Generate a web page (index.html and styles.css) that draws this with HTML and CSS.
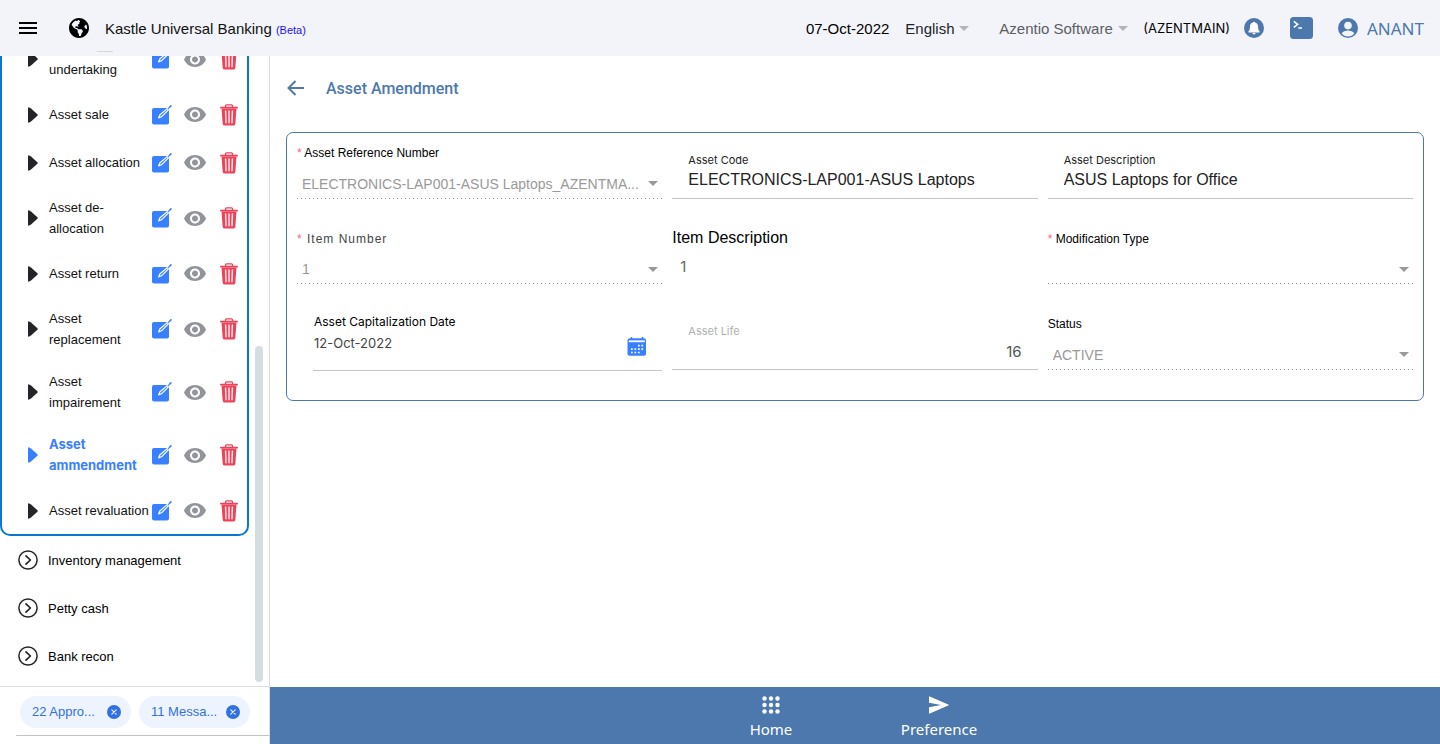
FILE: index.html
```html
<!DOCTYPE html>
<html lang="en">
<head>
<meta charset="utf-8">
<title>Kastle Universal Banking</title>
<link rel="stylesheet" href="styles.css">
</head>
<body>
<svg class="defs" aria-hidden="true">
  <symbol id="i-play" viewBox="0 0 10 16"><path d="M0 1.2Q0 0 1.2 .4L3 1.4 9.4 7.2Q10.2 8 9.4 8.8L3 14.600 1.200 15.600Q0 16 0 14.800z"/></symbol>
  <symbol id="i-edit" viewBox="0 0 20 20"><path d="M2 3H17V17.500Q17 19.500 15 19.500H2Q0 19.500 0 17.500V5Q0 3 2 3z"/><path d="M6.600 12.900 7.800 10 15.200 3.600 16.400 4.800 9.500 11.800z" fill="#3880ff" stroke="#fff" stroke-width="1.200" stroke-linejoin="round"/><path d="M17.300 2.500 18.900 .9" stroke="#3880ff" stroke-width="1.600" stroke-linecap="round"/></symbol>
  <symbol id="i-eye" viewBox="1 4.500 22 15"><path d="M12 4.500C7 4.500 2.730 7.610 1 12c1.730 4.390 6 7.500 11 7.500s9.270-3.110 11-7.500c-1.730-4.390-6-7.500-11-7.500zM12 17c-2.760 0-5-2.240-5-5s2.240-5 5-5 5 2.240 5 5-2.240 5-5 5zm0-8c-1.660 0-3 1.340-3 3s1.340 3 3 3 3-1.340 3-3-1.340-3-3-3z"/></symbol>
  <symbol id="i-trash" viewBox="0 0 18 22"><path d="M5.500 3V1.800Q5.500 .8 6.500 .8H11.500Q12.500 .8 12.500 1.800V3" fill="none" stroke="currentColor" stroke-width="1.300"/><rect y="2.800" width="18" height="1.800" rx=".8"/><path d="M1.500 4.500H16.500L15.300 20Q15.100 21.500 13.300 21.500H4.700Q2.900 21.500 2.700 20z"/><path d="M5.600 7 6 18.800M9 7V18.800M12.400 7 12 18.800" stroke="#fff" stroke-opacity=".85" stroke-width="1.500" stroke-linecap="round"/></symbol>
  <symbol id="i-next" viewBox="0 0 20 20"><circle cx="10" cy="10" r="9.100" fill="none" stroke="currentColor" stroke-width="1.500"/><path d="M8 5.800 12.400 10 8 14.200" fill="none" stroke="currentColor" stroke-width="1.700" stroke-linecap="round" stroke-linejoin="round"/></symbol>
  <symbol id="i-down" viewBox="0 0 10 5"><path d="M0 0H10L5 5z"/></symbol>
  <symbol id="i-close" viewBox="0 0 14 14"><circle cx="7" cy="7" r="7"/><path d="M4.800 4.800 9.200 9.200M9.200 4.800 4.800 9.200" stroke="#e6efff" stroke-width="1.200" stroke-linecap="round"/></symbol>
</svg>

<header class="topbar">
  <button class="icon-btn menu-btn" aria-label="Menu"><svg width="18" height="12" viewBox="0 0 18 12"><path d="M0 1H18M0 6H18M0 11H18" stroke="#000" stroke-width="2"/></svg></button>
  <svg class="globe" width="20" height="20" viewBox="0 8 496 496"><path d="M248 8C111.030 8 0 119.030 0 256s111.030 248 248 248 248-111.030 248-248S384.970 8 248 8zm82.290 357.600c-3.900 3.880-7.990 7.950-11.310 11.280-2.990 3-5.100 6.700-6.170 10.710-1.510 5.660-2.730 11.380-4.770 16.870l-17.390 46.850c-13.760 3-28 4.690-42.650 4.690v-27.380c1.690-12.620-7.640-36.260-22.630-51.250-6-6-9.370-14.140-9.370-22.630v-32.010c0-11.640-6.270-22.340-16.460-27.970-14.370-7.950-34.810-19.060-48.810-26.110-11.480-5.780-22.100-13.140-31.650-21.750l-.8-.72a114.792 114.792 0 0 1-18.060-20.740c-9.380-13.770-24.660-36.420-34.590-51.140 20.470-45.500 57.360-82.040 103.200-101.890l24.010 12.010C203.480 89.740 216 82.010 216 70.110v-11.300c7.990-1.290 16.120-2.110 24.390-2.420l28.300 28.300c6.250 6.250 6.250 16.380 0 22.630L264 112l-10.340 10.340c-3.120 3.120-3.120 8.190 0 11.310l4.690 4.690c3.120 3.120 3.120 8.190 0 11.310l-8 8a8.008 8.008 0 0 1-5.660 2.340h-8.990c-2.080 0-4.080.81-5.580 2.270l-9.920 9.650a8.008 8.008 0 0 0-1.580 9.310l15.590 31.190c2.660 5.320-1.210 11.580-7.150 11.580h-5.640c-1.930 0-3.790-.7-5.240-1.960l-9.280-8.060a16.017 16.017 0 0 0-15.550-3.100l-31.170 10.390a11.950 11.950 0 0 0-8.170 11.340c0 4.530 2.560 8.660 6.610 10.690l11.080 5.540c9.410 4.710 19.790 7.160 30.310 7.160s22.590 27.290 32 32h66.750c8.490 0 16.620 3.370 22.630 9.370l13.690 13.690a30.503 30.503 0 0 1 8.930 21.570 46.536 46.536 0 0 1-13.720 32.980zM417 274.250c-5.790-1.450-10.840-5-14.150-9.970l-17.980-26.970a23.970 23.970 0 0 1 0-26.620l19.590-29.380c2.320-3.470 5.500-6.290 9.240-8.150l12.980-6.490C440.200 193.590 448 223.870 448 256c0 8.670-.74 17.160-1.820 25.540L417 274.250z"/></svg>
  <h1 class="brand">Kastle Universal Banking <span class="beta">(Beta)</span></h1>
  <time class="today">07-Oct-2022</time>
  <label class="top-select language"><select aria-label="Language"><option>English</option></select><svg width="10" height="5"><use href="#i-down"/></svg></label>
  <label class="top-select company"><select aria-label="Company"><option>Azentio Software</option></select><svg width="10" height="5"><use href="#i-down"/></svg></label>
  <span class="branch">(AZENTMAIN)</span>
  <button class="icon-btn bell" aria-label="Notifications"><svg width="20" height="20" viewBox="0 0 20 20"><circle cx="10" cy="10" r="10"/><path d="M10 3.700c.6 0 1 .4 1 .9 2 .5 3.100 2 3.100 4.200 0 3 .6 3.800 1.500 4.700.3.400.1.900-.4.900H4.800c-.5 0-.7-.5-.4-.9.900-.9 1.500-1.700 1.500-4.700 0-2.200 1.100-3.700 3.100-4.200 0-.5.400-.9 1-.9zM8.400 15.100h3.200c-.2.800-.8 1.300-1.600 1.300s-1.400-.5-1.600-1.300z" fill="#fff"/></svg></button>
  <button class="icon-btn console" aria-label="Console"><svg width="23" height="22" viewBox="0 0 23 22"><rect width="23" height="22" rx="3.500"/><path d="M3.800 4.300 7.700 7.300 3.800 10.300M8.300 11H12" fill="none" stroke="#fff" stroke-width="1.500"/></svg></button>
  <button class="icon-btn user"><svg width="20" height="20" viewBox="0 0 20 20"><circle cx="10" cy="10" r="10"/><circle cx="10" cy="7.600" r="3.800" fill="#f3f4f9"/><path d="M3.700 15.300C5 13.300 7.500 12.500 10 12.500s5 .8 6.300 2.800C14.800 17.400 12.500 18.500 10 18.500s-4.800-1.100-6.300-3.200z" fill="#f3f4f9"/></svg><span>ANANT</span></button>
</header>

<div class="body">
  <aside class="sidebar">
    <nav class="nav">
      <ul class="group">
        <li class="item"><svg class="play"><use href="#i-play"/></svg><a href="#"><br>undertaking</a><button class="icon-btn edit" aria-label="Edit"><svg><use href="#i-edit"/></svg></button><button class="icon-btn view" aria-label="View"><svg><use href="#i-eye"/></svg></button><button class="icon-btn trash" aria-label="Delete"><svg><use href="#i-trash"/></svg></button></li>
        <li class="item"><svg class="play"><use href="#i-play"/></svg><a href="#">Asset sale</a><button class="icon-btn edit" aria-label="Edit"><svg><use href="#i-edit"/></svg></button><button class="icon-btn view" aria-label="View"><svg><use href="#i-eye"/></svg></button><button class="icon-btn trash" aria-label="Delete"><svg><use href="#i-trash"/></svg></button></li>
        <li class="item"><svg class="play"><use href="#i-play"/></svg><a href="#">Asset allocation</a><button class="icon-btn edit" aria-label="Edit"><svg><use href="#i-edit"/></svg></button><button class="icon-btn view" aria-label="View"><svg><use href="#i-eye"/></svg></button><button class="icon-btn trash" aria-label="Delete"><svg><use href="#i-trash"/></svg></button></li>
        <li class="item"><svg class="play"><use href="#i-play"/></svg><a href="#">Asset de-<br>allocation</a><button class="icon-btn edit" aria-label="Edit"><svg><use href="#i-edit"/></svg></button><button class="icon-btn view" aria-label="View"><svg><use href="#i-eye"/></svg></button><button class="icon-btn trash" aria-label="Delete"><svg><use href="#i-trash"/></svg></button></li>
        <li class="item"><svg class="play"><use href="#i-play"/></svg><a href="#">Asset return</a><button class="icon-btn edit" aria-label="Edit"><svg><use href="#i-edit"/></svg></button><button class="icon-btn view" aria-label="View"><svg><use href="#i-eye"/></svg></button><button class="icon-btn trash" aria-label="Delete"><svg><use href="#i-trash"/></svg></button></li>
        <li class="item"><svg class="play"><use href="#i-play"/></svg><a href="#">Asset<br>replacement</a><button class="icon-btn edit" aria-label="Edit"><svg><use href="#i-edit"/></svg></button><button class="icon-btn view" aria-label="View"><svg><use href="#i-eye"/></svg></button><button class="icon-btn trash" aria-label="Delete"><svg><use href="#i-trash"/></svg></button></li>
        <li class="item"><svg class="play"><use href="#i-play"/></svg><a href="#">Asset<br>impairement</a><button class="icon-btn edit" aria-label="Edit"><svg><use href="#i-edit"/></svg></button><button class="icon-btn view" aria-label="View"><svg><use href="#i-eye"/></svg></button><button class="icon-btn trash" aria-label="Delete"><svg><use href="#i-trash"/></svg></button></li>
        <li class="item active"><svg class="play"><use href="#i-play"/></svg><a href="#" aria-current="page">Asset<br>ammendment</a><button class="icon-btn edit" aria-label="Edit"><svg><use href="#i-edit"/></svg></button><button class="icon-btn view" aria-label="View"><svg><use href="#i-eye"/></svg></button><button class="icon-btn trash" aria-label="Delete"><svg><use href="#i-trash"/></svg></button></li>
        <li class="item"><svg class="play"><use href="#i-play"/></svg><a href="#">Asset revaluation</a><button class="icon-btn edit" aria-label="Edit"><svg><use href="#i-edit"/></svg></button><button class="icon-btn view" aria-label="View"><svg><use href="#i-eye"/></svg></button><button class="icon-btn trash" aria-label="Delete"><svg><use href="#i-trash"/></svg></button></li>
      </ul>
      <a class="section" href="#"><svg><use href="#i-next"/></svg>Inventory management</a>
      <a class="section" href="#"><svg><use href="#i-next"/></svg>Petty cash</a>
      <a class="section" href="#"><svg><use href="#i-next"/></svg>Bank recon</a>
      <span class="thumb"></span>
    </nav>
    <div class="chips">
      <div class="chip"><span>22 Appro...</span><button class="icon-btn" aria-label="Dismiss approvals"><svg><use href="#i-close"/></svg></button></div>
      <div class="chip"><span>11 Messa...</span><button class="icon-btn" aria-label="Dismiss messages"><svg><use href="#i-close"/></svg></button></div>
    </div>
  </aside>

  <div class="page">
    <main class="content">
      <div class="title-row">
        <button class="icon-btn back" aria-label="Back"><svg width="18" height="16" viewBox="0 0 18 16"><path d="M17 8H2M8.500 1 1.500 8 8.500 15" fill="none" stroke="#4c78ae" stroke-width="2"/></svg></button>
        <h2>Asset Amendment</h2>
      </div>
      <form class="card">
        <div class="field dotted">
          <label for="ref"><span class="req">*</span> Asset Reference Number</label>
          <div class="select"><select id="ref" disabled><option>ELECTRONICS-LAP001-ASUS Laptops_AZENTMA...</option></select><svg><use href="#i-down"/></svg></div>
        </div>
        <div class="field solid floating">
          <label for="code">Asset Code</label>
          <input id="code" type="text" value="ELECTRONICS-LAP001-ASUS Laptops">
        </div>
        <div class="field solid floating">
          <label for="desc">Asset Description</label>
          <input id="desc" type="text" value="ASUS Laptops for Office">
        </div>
        <div class="field dotted">
          <label class="spaced" for="item"><span class="req">*</span> Item Number</label>
          <div class="select"><select id="item" disabled><option>1</option></select><svg><use href="#i-down"/></svg></div>
        </div>
        <div class="field plain">
          <label for="itemdesc">Item Description</label>
          <input id="itemdesc" type="text" value="1" disabled>
        </div>
        <div class="field dotted">
          <label for="mod"><span class="req">*</span> Modification Type</label>
          <div class="select"><select id="mod" disabled><option></option></select><svg><use href="#i-down"/></svg></div>
        </div>
        <div class="field solid date">
          <label for="cap">Asset Capitalization Date</label>
          <div class="date-row"><input id="cap" type="text" value="12-Oct-2022"><button type="button" class="icon-btn" aria-label="Pick a date"><svg width="20" height="19" viewBox="0 0 20 19"><path d="M3 1.200H17Q19 1.200 19 3.200V17Q19 18.800 17 18.800H2.500Q.5 18.800 .5 17V3.200Q.5 1.200 3 1.200z" fill="#3880ff"/><path d="M4.500 0V3M15.500 0V3" stroke="#3880ff" stroke-width="1.500"/><path d="M1.800 3.400H17.800V5.200H1.800z" fill="#fff"/><path d="M11 8.700H12.700M14.400 8.700H16.100M4 12.100H5.700M7.500 12.100H9.200M11 12.100H12.700M14.400 12.100H16.100M4 15.500H5.700M7.500 15.500H9.200M11 15.500H12.700" stroke="#fff" stroke-width="1.700"/></svg></button></div>
        </div>
        <div class="field solid floating life">
          <label for="life">Asset Life</label>
          <input id="life" type="text" value="16" disabled>
        </div>
        <div class="field dotted">
          <label for="status">Status</label>
          <div class="select"><select id="status" disabled><option>ACTIVE</option></select><svg><use href="#i-down"/></svg></div>
        </div>
      </form>
    </main>
    <footer class="tabs">
      <a href="#"><svg width="18" height="18" viewBox="0 0 18 18"><g fill="#fff"><circle cx="2.500" cy="2.500" r="2.200"/><circle cx="9" cy="2.500" r="2.200"/><circle cx="15.500" cy="2.500" r="2.200"/><circle cx="2.500" cy="9" r="2.200"/><circle cx="9" cy="9" r="2.200"/><circle cx="15.500" cy="9" r="2.200"/><circle cx="2.500" cy="15.500" r="2.200"/><circle cx="9" cy="15.500" r="2.200"/><circle cx="15.500" cy="15.500" r="2.200"/></g></svg>Home</a>
      <a href="#"><svg width="20" height="18" viewBox="0 0 20 18"><path d="M0 1Q0 .2 .8 .4L19.200 8.400Q20.300 9 19.200 9.600L.8 17.600Q0 17.800 0 17V11.200L12 9 0 6.800z" fill="#fff"/></svg>Preference</a>
    </footer>
  </div>
</div>
</body>
</html>
```

FILE: styles.css
```css
* { box-sizing: border-box; }
body { margin: 0; height: 100vh; display: flex; flex-direction: column; overflow: hidden; background: #fff; color: #000; font-family: "Liberation Sans", Arial, sans-serif; font-size: 13px; }
.defs { position: absolute; width: 0; height: 0; }
h1, h2, ul { margin: 0; padding: 0; font-weight: 400; }
a { color: inherit; text-decoration: none; }
svg { display: block; fill: currentColor; flex: none; }
input, select { margin: 0; padding: 0; border: 0; outline: 0; background: none; font: inherit; color: inherit; opacity: 1; appearance: none; min-width: 0; }
.icon-btn { display: flex; align-items: center; flex: none; margin: 0; padding: 0; border: 0; background: none; color: #4c78ae; font: inherit; cursor: pointer; }

.topbar { position: relative; flex: none; height: 56px; display: flex; align-items: center; padding: 0 16px 0 19px; background: #f3f4f9; }
.topbar::after { content: ""; position: absolute; left: 97px; bottom: 4px; width: 16px; height: 1px; background: #d5d6da; }
.globe { margin-left: 32px; color: #000; }
.brand { margin-left: 16px; flex: 1; font-size: 15px; color: #111; white-space: nowrap; }
.beta { font-size: 11px; color: #1d12f5; }
.today { font-size: 15px; }
.top-select { display: grid; align-items: center; margin-left: 16px; font-size: 15px; }
.top-select > * { grid-area: 1 / 1; }
.top-select svg { justify-self: end; color: #b2b4b9; pointer-events: none; }
.language { width: 64px; color: #222428; }
.company { width: 129px; margin-left: 30px; color: #5c5e62; }
.branch { margin-left: 15px; font-family: Inter, sans-serif; font-size: 13px; }
.bell { margin-left: 14px; }
.console { margin-left: 26px; }
.user { margin-left: 25px; gap: 9px; font-family: "Noto Sans", sans-serif; font-size: 17px; }

.body { flex: 1; min-height: 0; display: flex; }
.sidebar { flex: none; width: 270px; display: flex; flex-direction: column; border-right: 1px solid #dcdddf; }
.nav { position: relative; flex: 1; min-height: 0; overflow: hidden; display: flex; flex-direction: column; justify-content: flex-end; padding-bottom: 6px; border-bottom: 1px solid #dedede; }
.group { flex: none; list-style: none; margin-right: 20px; border: 2px solid #0b78d0; border-top: 0; border-radius: 0 0 10px 10px; }
.item { display: flex; align-items: center; min-height: 48px; padding: 11px 9px 10px 26px; line-height: 21px; color: #222428; }
.item a { flex: 1; margin-left: 11px; white-space: nowrap; min-width: 0; color: #111; }
.play { width: 10px; height: 16px; }
.edit { color: #3880ff; }
.edit svg { width: 20px; height: 20px; }
.view { margin-left: 12px; color: #92949c; }
.view svg { width: 22px; height: 15px; }
.trash { margin-left: 14px; color: #eb445a; }
.trash svg { width: 18px; height: 22px; }
.active .play { color: #3880ff; }
.active a { color: #3880ff; font-family: Inter, sans-serif; font-weight: 700; }
.section { flex: none; height: 48px; display: flex; align-items: center; gap: 10px; padding-left: 18px; }
.section svg { width: 20px; height: 20px; color: #222428; }
.thumb { position: absolute; right: 6px; bottom: 4px; width: 8px; height: 336px; border-radius: 4px; background: #d5dde0; }
.chips { flex: none; height: 49px; display: flex; align-items: center; gap: 8px; margin: 0 0 8px 16px; padding: 1px 4px 0; border-bottom: 1px solid #c3c3c3; }
.chip { display: flex; align-items: center; justify-content: space-between; width: 111px; height: 32px; padding: 0 10px 0 12px; border-radius: 16px; background: #edf4ff; color: #3171e0; }
.chip .icon-btn { color: #3171e0; }
.chip svg { width: 14px; height: 14px; }

.page { flex: 1; min-width: 0; display: flex; flex-direction: column; }
.content { flex: 1; padding: 16px; }
.title-row { display: flex; align-items: center; gap: 21px; height: 32px; padding-left: 1px; color: #4c78ae; }
.title-row h2 { font-family: Roboto, sans-serif; font-size: 16px; font-weight: 500; }
.card { display: grid; grid-template-columns: repeat(3, minmax(0, 1fr)); column-gap: 10px; margin-top: 28px; padding: 0 10px 29px; border: 1px solid #4c78ae; border-radius: 7px; font-size: 12px; }
.field { display: flex; flex-direction: column; padding-top: 12px; height: 66px; }
.field:nth-child(n + 4) { height: 85px; padding-top: 32px; }
.field label { line-height: 16px; }
.req { color: #eb445a; opacity: .8; }
.solid { border-bottom: 1px solid #c4c4c6; }
.dotted { background: repeating-linear-gradient(90deg, #8c8c8c 0 1px, transparent 1px 4px) bottom / 100% 1px no-repeat; }
.spaced { letter-spacing: 1px; color: #444; }
.select { flex: 1; display: grid; align-items: center; padding: 7px 4px 0 5px; font-size: 14px; color: #999; }
.select > * { grid-area: 1 / 1; }
.select select { width: 100%; height: 20px; }
.select svg { width: 10px; height: 5px; justify-self: end; pointer-events: none; }
.floating { padding: 19px 16px 0; }
.floating label { font-family: Inter, sans-serif; font-size: 11px; color: #222; }
.floating input { height: 24px; font-size: 16px; color: #222; }
.field.plain { padding-top: 29px; }
.plain label { font-size: 16px; line-height: 20px; }
.plain input { margin-top: 8px; padding-left: 8px; height: 20px; font-family: Inter, sans-serif; font-size: 15px; color: #666; }
.field.date { margin: 0 0 0 16px; height: 87px; padding: 30px 0 0 1px; font-family: Inter, sans-serif; }
.date-row { display: flex; align-items: flex-start; padding-right: 15px; font-size: 13px; color: #444; }
.date-row input { flex: 1; height: 26px; }
.date-row .icon-btn { margin-top: 7px; }
.field.life { height: 86px; padding-top: 39px; }
.life label { color: #b0b0b0; }
.life input { height: 24px; text-align: right; font-family: Inter, sans-serif; font-size: 15px; color: #555; }
.field:last-child { height: 86px; }

.tabs { flex: none; height: 57px; display: flex; justify-content: center; background: #4c78ae; color: #fff; font-family: "Noto Sans", sans-serif; font-size: 15px; }
.tabs a { width: 168px; display: flex; flex-direction: column; align-items: center; gap: 7px; padding-top: 9px; line-height: 16px; }
```
